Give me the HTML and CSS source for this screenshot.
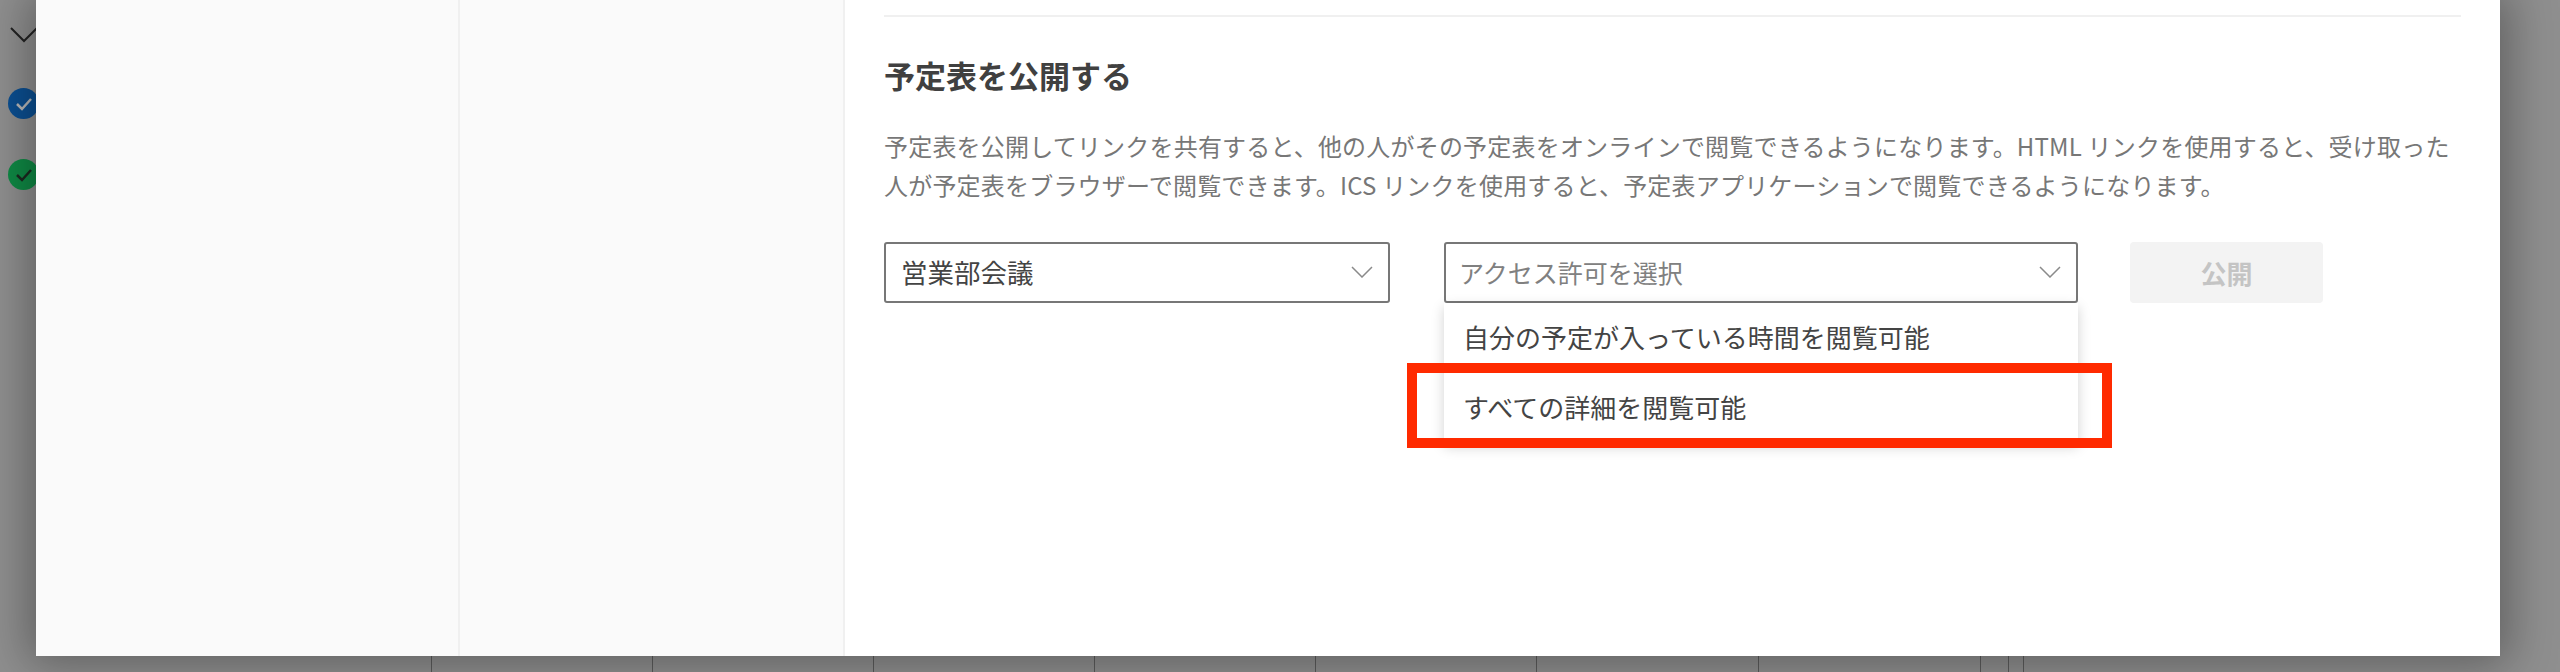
FILE: index.html
```html
<!DOCTYPE html>
<html lang="ja">
<head>
  <meta charset="UTF-8" />
  <title>予定表を公開する</title>
  <link rel="stylesheet" href="styles.css">
</head>
<body>
  <div class="backdrop">
    <div class="peek">
      <svg class="peek-chevron" width="28" height="16" viewBox="0 0 28 16"><path d="M1 1 L14 14 L27 1" /></svg>
      <span class="peek-dot dot-blue"><svg width="18" height="14" viewBox="0 0 18 14"><path d="M2 7 L7 12 L16 2" /></svg></span>
      <span class="peek-dot dot-green"><svg width="18" height="14" viewBox="0 0 18 14"><path d="M2 7 L7 12 L16 2" /></svg></span>
    </div>

    <div class="grid-lines">
      <i style="left: 431px"></i>
      <i style="left: 652px"></i>
      <i style="left: 873px"></i>
      <i style="left: 1094px"></i>
      <i style="left: 1315px"></i>
      <i style="left: 1536px"></i>
      <i style="left: 1758px"></i>
      <i style="left: 1980px"></i>
      <i style="left: 2008px"></i>
      <i style="left: 2023px"></i>
    </div>

    <div class="modal">
      <div class="nav-col"></div>
      <div class="nav-col"></div>
      <div class="main">
        <hr class="rule" />
        <h2 class="title">予定表を公開する</h2>
        <p class="desc">予定表を公開してリンクを共有すると、他の人がその予定表をオンラインで閲覧できるようになります。HTML リンクを使用すると、受け取った人が予定表をブラウザーで閲覧できます。ICS リンクを使用すると、予定表アプリケーションで閲覧できるようになります。</p>
        <div class="controls">
          <div class="select select-calendar">
            <span>営業部会議</span>
            <svg class="chevron" width="22" height="12" viewBox="0 0 22 12"><path d="M1 1 L11 11 L21 1" /></svg>
          </div>
          <div class="select select-access">
            <span class="placeholder">アクセス許可を選択</span>
            <svg class="chevron" width="22" height="12" viewBox="0 0 22 12"><path d="M1 1 L11 11 L21 1" /></svg>
            <ul class="menu">
              <li>自分の予定が入っている時間を閲覧可能</li>
              <li>すべての詳細を閲覧可能</li>
            </ul>
            <div class="highlight"></div>
          </div>
          <button class="publish">公開</button>
        </div>
      </div>
    </div>
  </div>
</body>
</html>
```

FILE: styles.css
```css
html, body {
  margin: 0;
  height: 100%;
}

body {
  font-family: "Noto Sans CJK JP", "Noto Sans", sans-serif;
  overflow: hidden;
}

.backdrop {
  position: relative;
  height: 672px;
  overflow: hidden;
  background: #8f8f8f;
}

.peek {
  display: flex;
  flex-direction: column;
  align-items: flex-start;
  padding: 27px 0 0 8px;
}

.peek-chevron path {
  fill: none;
  stroke: #222;
  stroke-width: 2;
}

.peek-chevron {
  margin: 0 0 0 2px;
}

.peek-dot {
  width: 31px;
  height: 31px;
  border-radius: 50%;
  display: flex;
  align-items: center;
  justify-content: center;
}

.peek-dot path {
  fill: none;
  stroke-width: 2.5;
}

.dot-blue {
  background: #0b4f92;
  margin-top: 45px;
}

.dot-blue path {
  stroke: #b9b9b9;
}

.dot-green {
  background: #0f8a45;
  margin-top: 40px;
}

.dot-green path {
  stroke: #1b2a20;
}

.grid-lines i {
  position: absolute;
  top: 640px;
  bottom: 0;
  width: 1px;
  background: #5c5c5c;
}

.modal {
  position: absolute;
  left: 36px;
  top: 0;
  width: 2464px;
  height: 656px;
  display: grid;
  grid-template-columns: 424px 385px 1fr;
  background: #fff;
  box-shadow: 0 0 44px 8px rgba(0, 0, 0, 0.34);
}

.nav-col {
  background: #fafafa;
  border-right: 2px solid #f0f0f0;
}

.main {
  padding: 15px 39px 0 39px;
  min-width: 0;
}

.rule {
  border: none;
  border-top: 2px solid #f0f0f0;
  margin: 0;
}

.title {
  margin: 36px 0 0;
  font-size: 31px;
  line-height: 44px;
  font-weight: 700;
  color: #404040;
}

.desc {
  margin: 29px 0 0;
  font-size: 24px;
  line-height: 39px;
  letter-spacing: 0.2px;
  color: #777;
}

.controls {
  display: flex;
  align-items: flex-start;
  gap: 54px;
  margin-top: 38px;
}

.select {
  position: relative;
  box-sizing: border-box;
  height: 61px;
  display: flex;
  align-items: center;
  justify-content: space-between;
  padding: 0 15px 2px 15px;
  border: 2px solid #777;
  border-radius: 3px;
  font-size: 26.5px;
  color: #444;
  background: #fff;
}

.select-calendar {
  width: 506px;
}

.select-access {
  width: 634px;
  padding-left: 13px;
  font-size: 25px;
}

.placeholder {
  color: #808080;
}

.chevron path {
  fill: none;
  stroke: #8a8a8a;
  stroke-width: 1.5;
}

.menu {
  position: absolute;
  left: -2px;
  right: -2px;
  top: 59px;
  margin: 0;
  padding: 0;
  list-style: none;
  background: #fff;
  box-shadow: 0 4px 12px rgba(0, 0, 0, 0.18);
  font-size: 26px;
  color: #444;
}

.menu li {
  height: 70px;
  line-height: 68px;
  padding-left: 19px;
}

.highlight {
  position: absolute;
  left: -39px;
  top: 119px;
  width: 685px;
  height: 65px;
  border: 10px solid #ff2a00;
}

.publish {
  width: 193px;
  height: 61px;
  margin-left: -2px;
  border: none;
  border-radius: 4px;
  background: #f3f3f3;
  color: #c4c4c4;
  font-family: inherit;
  font-size: 26px;
  font-weight: 700;
}
```
